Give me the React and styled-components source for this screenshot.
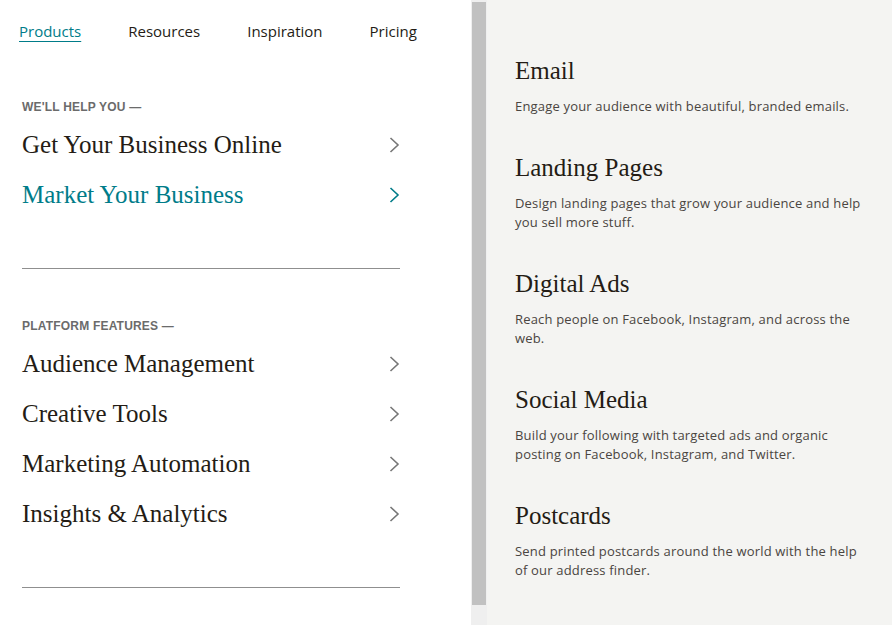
import React from "react";
import styled, { createGlobalStyle } from "styled-components";

const GlobalStyle = createGlobalStyle`
  html, body {
    margin: 0;
    padding: 0;
    background: #ffffff;
  }
  body {
    font-family: "Open Sans", "Liberation Sans", Arial, sans-serif;
    -webkit-font-smoothing: antialiased;
  }
`;

const Colors = {
  ink: "#241c15",
  teal: "#007c89",
  muted: "#6b6b6b",
  body: "#4a4541",
  rule: "#8f8f8f",
  panel: "#f4f4f2",
  track: "#efefef",
  thumb: "#c1c1c1"
};

const Page = styled.div`
  display: flex;
  width: 892px;
  height: 625px;
  overflow: hidden;
`;

const Left = styled.div`
  width: 471px;
  flex: none;
  background: #ffffff;
`;

const Nav = styled.nav`
  display: flex;
  gap: 47px;
  padding: 21px 0 0 19px;
  height: 42px;
  box-sizing: border-box;
`;

const NavLink = styled.a`
  font-size: 15px;
  line-height: 20px;
  color: ${p => (p.active ? Colors.teal : Colors.ink)};
  text-decoration: ${p => (p.active ? "underline" : "none")};
  text-underline-offset: 4px;
  text-decoration-thickness: 1px;
  cursor: pointer;
`;

const Menu = styled.div`
  width: 378px;
  margin-left: 22px;
  padding-top: 56px;
`;

const Group = styled.div`
  padding-bottom: 48px;
  border-bottom: 1px solid ${Colors.rule};
  margin-bottom: 48px;
`;

const Label = styled.div`
  font-family: "Liberation Sans", Arial, sans-serif;
  font-size: 12px;
  line-height: 18px;
  font-weight: 700;
  letter-spacing: 0.2px;
  color: ${Colors.muted};
  text-transform: uppercase;
  margin-bottom: 4px;
`;

const Row = styled.a`
  display: flex;
  align-items: center;
  justify-content: space-between;
  height: 50px;
  font-family: "Liberation Serif", "Times New Roman", serif;
  font-size: 25px;
  color: ${p => (p.active ? Colors.teal : Colors.ink)};
  cursor: pointer;

  svg {
    flex: none;
    stroke: ${p => (p.active ? Colors.teal : "#777777")};
  }
`;

const Panel = styled.div`
  flex: 1;
  display: flex;
  background: ${Colors.panel};
`;

const Track = styled.div`
  width: 16px;
  flex: none;
  background: ${Colors.track};
  padding: 2px 1px 0 1px;
  box-sizing: border-box;
`;

const Thumb = styled.div`
  height: 603px;
  background: ${Colors.thumb};
`;

const Products = styled.div`
  padding: 55px 24px 0 28px;
  width: 352px;
`;

const Item = styled.div`
  margin-bottom: 36px;
`;

const ItemTitle = styled.h3`
  margin: 0 0 10px;
  font-family: "Liberation Serif", "Times New Roman", serif;
  font-weight: 400;
  font-size: 25px;
  line-height: 32px;
  color: ${Colors.ink};
`;

const ItemText = styled.p`
  margin: 0;
  font-size: 13px;
  line-height: 19px;
  letter-spacing: 0.18px;
  color: ${Colors.body};
`;

const Chevron = () => (
  <svg width="11" height="16" viewBox="0 0 11 16" fill="none" strokeWidth="1.6">
    <path d="M1.5 1 L9 8 L1.5 15" />
  </svg>
);

const navItems = ["Products", "Resources", "Inspiration", "Pricing"];

const groups = [
  {
    label: "We'll help you —",
    rows: [
      { title: "Get Your Business Online" },
      { title: "Market Your Business", active: true }
    ]
  },
  {
    label: "Platform features —",
    rows: [
      { title: "Audience Management" },
      { title: "Creative Tools" },
      { title: "Marketing Automation" },
      { title: "Insights & Analytics" }
    ]
  }
];

const products = [
  { title: "Email", text: "Engage your audience with beautiful, branded emails." },
  {
    title: "Landing Pages",
    text: "Design landing pages that grow your audience and help you sell more stuff."
  },
  {
    title: "Digital Ads",
    text: "Reach people on Facebook, Instagram, and across the web."
  },
  {
    title: "Social Media",
    text: "Build your following with targeted ads and organic posting on Facebook, Instagram, and Twitter."
  },
  {
    title: "Postcards",
    text: "Send printed postcards around the world with the help of our address finder."
  }
];

export default function App() {
  return (
    <Page>
      <GlobalStyle />
      <Left>
        <Nav>
          {navItems.map((item, index) => (
            <NavLink key={item} active={index === 0}>
              {item}
            </NavLink>
          ))}
        </Nav>
        <Menu>
          {groups.map(group => (
            <Group key={group.label}>
              <Label>{group.label}</Label>
              {group.rows.map(row => (
                <Row key={row.title} active={row.active}>
                  {row.title}
                  <Chevron />
                </Row>
              ))}
            </Group>
          ))}
        </Menu>
      </Left>
      <Panel>
        <Track>
          <Thumb />
        </Track>
        <Products>
          {products.map(product => (
            <Item key={product.title}>
              <ItemTitle>{product.title}</ItemTitle>
              <ItemText>{product.text}</ItemText>
            </Item>
          ))}
        </Products>
      </Panel>
    </Page>
  );
}
